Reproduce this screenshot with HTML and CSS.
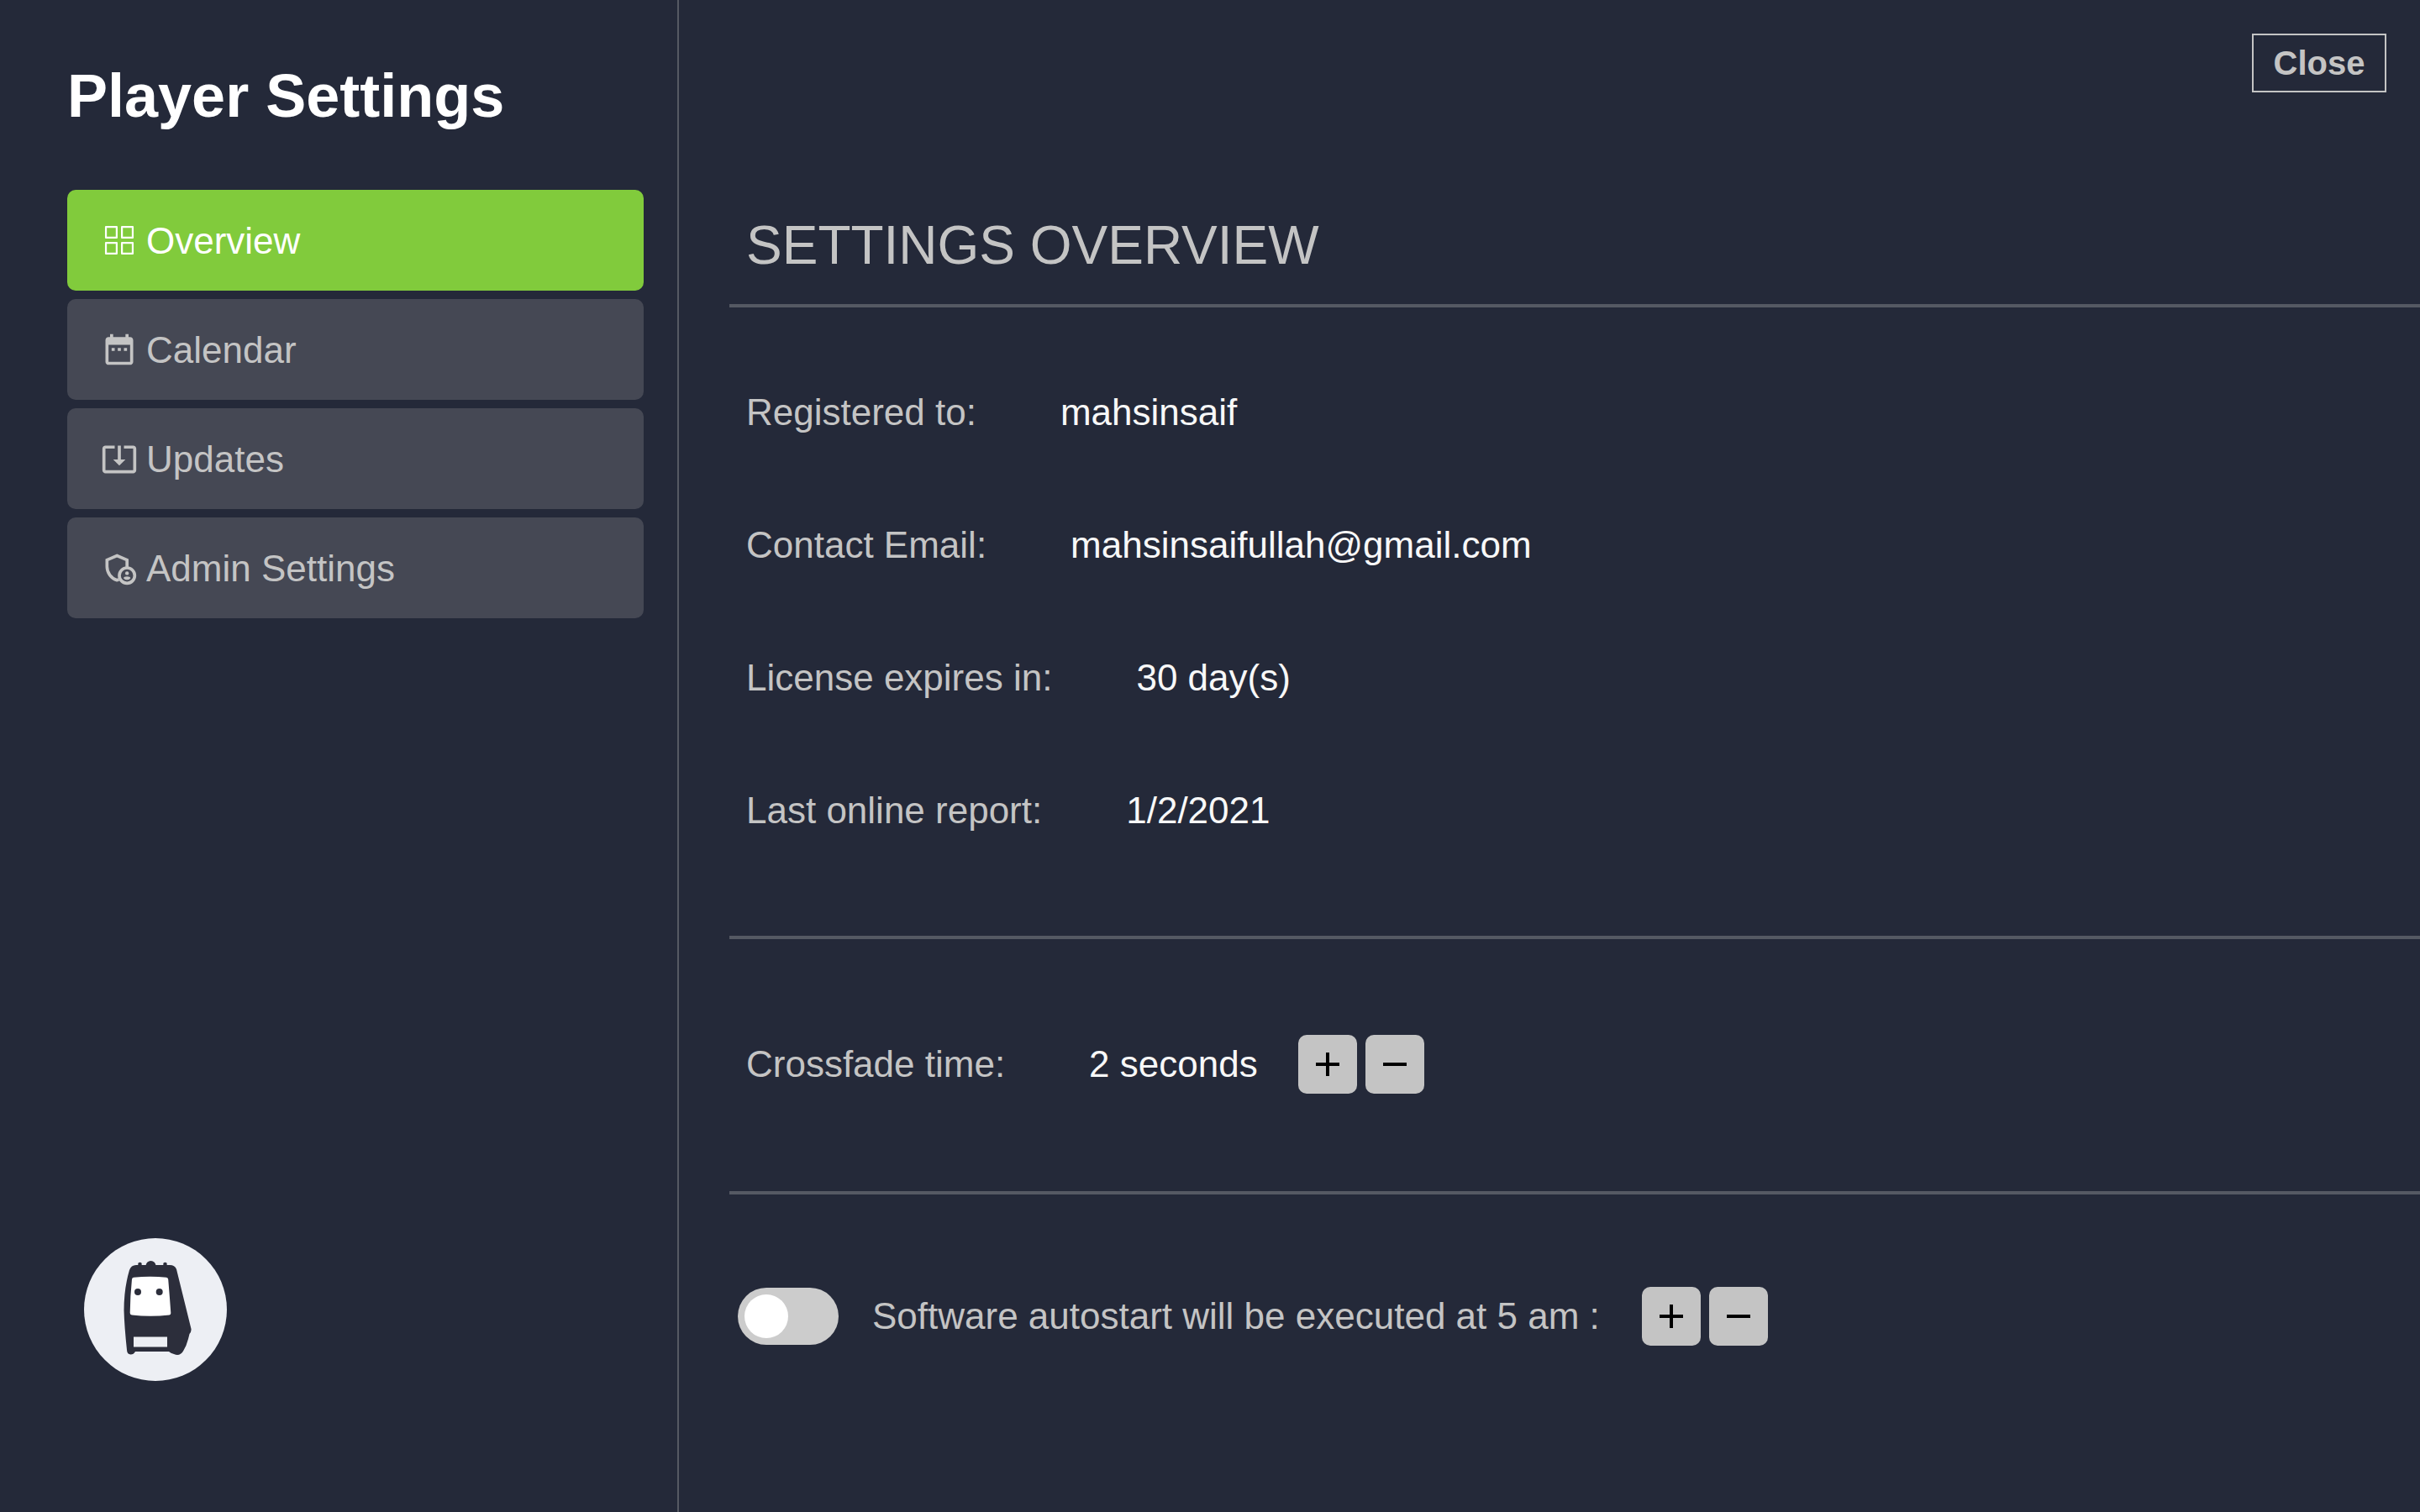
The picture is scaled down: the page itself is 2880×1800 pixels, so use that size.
FILE: index.html
```html
<!DOCTYPE html>
<html lang="en">
<head>
<meta charset="utf-8">
<title>Player Settings</title>
<link rel="stylesheet" href="styles.css">
</head>
<body>
<div class="app">
  <aside class="sidebar">
    <h1 class="title">Player Settings</h1>
    <nav class="menu">
      <a class="menu-item active" href="#overview">
        <svg class="icon" viewBox="0 0 24 24" aria-hidden="true"><path fill="none" stroke="currentColor" stroke-width="1.200" stroke-linejoin="round" d="M3.300 3.300h7v7h-7zM13.700 3.300h7v7h-7zM3.300 13.700h7v7h-7zM13.700 13.700h7v7h-7z"/></svg>
        <span>Overview</span>
      </a>
      <a class="menu-item" href="#calendar">
        <svg class="icon" viewBox="0 0 24 24" aria-hidden="true"><path fill="currentColor" d="M9 11H7v2h2v-2zm4 0h-2v2h2v-2zm4 0h-2v2h2v-2zm2-7h-1V2h-2v2H8V2H6v2H5c-1.110 0-1.990.9-1.990 2L3 20c0 1.100.89 2 2 2h14c1.100 0 2-.9 2-2V6c0-1.100-.9-2-2-2zm0 16H5V9h14v11z"/></svg>
        <span>Calendar</span>
      </a>
      <a class="menu-item" href="#updates">
        <svg class="icon" viewBox="0 0 24 24" aria-hidden="true"><path fill="currentColor" d="M12 16.500l4-4h-3v-9h-2v9H8l4 4zm9-13h-6v1.990h6v14.030H3V5.490h6V3.500H3c-1.100 0-2 .9-2 2v14c0 1.100.9 2 2 2h18c1.100 0 2-.9 2-2v-14c0-1.100-.9-2-2-2z"/></svg>
        <span>Updates</span>
      </a>
      <a class="menu-item" href="#admin">
        <svg class="icon" viewBox="0 0 24 24" aria-hidden="true"><path fill="none" stroke="currentColor" stroke-width="2" d="M17 11.500V6.900L10.500 4.100 4 6.900v4.300c0 4 2.700 7.700 6.500 8.800l1.200-.4"/><circle cx="17" cy="17" r="5" fill="none" stroke="currentColor" stroke-width="2"/><circle cx="17" cy="15.500" r="1.200" fill="currentColor"/><path fill="currentColor" d="M17 17.600c-1.200 0-2.300.5-2.300 1.100.5.700 1.300 1.100 2.300 1.100s1.800-.4 2.300-1.100c0-.6-1.100-1.100-2.300-1.100z"/></svg>
        <span>Admin Settings</span>
      </a>
    </nav>
    <svg class="logo" viewBox="0 0 170 170" role="img" aria-label="Player">
      <circle cx="85" cy="85" r="85" fill="#edeff4"/>
      <path fill="#2c2e3b" d="M62 32H102Q108 32 110 37L127.500 108Q128 111 125.500 114L124 120Q122 128 118 134.500Q114 141 107 138Q103 137 101 135H61Q59 138.500 55.500 138.500Q51 138 51 133Q48 105 47.500 86Q47.500 60 54 38Q56 32 62 32Z"/>
      <circle cx="66.500" cy="31" r="2.300" fill="#2c2e3b"/>
      <circle cx="79.500" cy="33" r="6" fill="#2c2e3b"/>
      <circle cx="96.500" cy="31" r="2.300" fill="#2c2e3b"/>
      <path fill="#fff" d="M57 49Q57 47 59 46.700Q79 45 98 46.700Q100 47 100.200 49Q102 70 103.300 89Q103.500 91 101.500 91.500Q79 94 57 91.500Q54.700 91 54.700 89Q55 68 57 49Z"/>
      <circle cx="64" cy="64" r="4" fill="#2c2e3b"/>
      <circle cx="89.700" cy="64" r="4" fill="#2c2e3b"/>
      <path fill="#edeff4" d="M59 117.500h40V129.500H59z"/>
    </svg>
  </aside>
  <main class="content">
    <header class="topbar"><button class="close" type="button">Close</button></header>
    <h2 class="heading">SETTINGS OVERVIEW</h2>
    <dl class="details">
      <div class="row"><dt>Registered to:</dt><dd>mahsinsaif</dd></div>
      <div class="row"><dt>Contact Email:</dt><dd>mahsinsaifullah@gmail.com</dd></div>
      <div class="row"><dt>License expires in:</dt><dd>30 day(s)</dd></div>
      <div class="row"><dt>Last online report:</dt><dd>1/2/2021</dd></div>
    </dl>
    <section class="setting crossfade">
      <span>Crossfade time:</span>
      <output class="value">2 seconds</output>
      <div class="stepper">
        <button class="step" type="button" aria-label="Increase crossfade time"><svg viewBox="0 0 28 28"><path d="M14 0v28M0 14h28"/></svg></button>
        <button class="step" type="button" aria-label="Decrease crossfade time"><svg viewBox="0 0 28 28"><path d="M0 14h28"/></svg></button>
      </div>
    </section>
    <section class="setting autostart">
      <input class="switch" type="checkbox" id="autostart">
      <label for="autostart">Software autostart will be executed at 5 am :</label>
      <div class="stepper">
        <button class="step" type="button" aria-label="Later autostart"><svg viewBox="0 0 28 28"><path d="M14 0v28M0 14h28"/></svg></button>
        <button class="step" type="button" aria-label="Earlier autostart"><svg viewBox="0 0 28 28"><path d="M0 14h28"/></svg></button>
      </div>
    </section>
  </main>
</div>
</body>
</html>
```
FILE: styles.css
```css
* { box-sizing: border-box; }
body {
  margin: 0;
  background: #242939;
  color: #c4c4c4;
  font-family: "Liberation Sans", Helvetica, Arial, sans-serif;
  font-size: 44px;
  line-height: 50px;
}
button { font: inherit; }
.app { display: flex; min-height: 100vh; }
.sidebar {
  display: flex;
  flex-direction: column;
  flex: 0 0 808px;
  padding: 74px 40px 156px 80px;
  border-right: 2px solid #555963;
}
.title {
  margin: 0 0 72px;
  color: #fff;
  font-size: 72px;
  line-height: 80px;
}
.menu { display: flex; flex-direction: column; gap: 10px; }
.menu-item {
  display: flex;
  align-items: center;
  gap: 10px;
  height: 120px;
  padding: 0 40px;
  border-radius: 10px;
  background: #454854;
  color: inherit;
  text-decoration: none;
}
.menu-item span { padding-top: 2px; }
.menu-item.active { background: #81cb3c; color: #fff; }
.icon { width: 44px; height: 44px; }
.logo { width: 170px; height: 170px; margin: auto 0 0 20px; }
.content { flex: 1; padding: 40px 0 0 60px; }
.topbar { display: flex; justify-content: flex-end; padding-right: 40px; }
.close {
  width: 160px;
  height: 70px;
  padding: 0;
  border: 2px solid #c4c4c4;
  background: none;
  color: inherit;
  font-size: 40px;
  font-weight: bold;
}
.heading {
  margin: 0;
  padding: 144px 20px 32px;
  border-bottom: 4px solid #555963;
  font-size: 64px;
  font-weight: normal;
  line-height: 76px;
}
.details {
  display: flex;
  flex-direction: column;
  gap: 108px;
  margin: 0;
  padding: 100px 20px 124px;
}
.row { display: flex; gap: 100px; }
.row dd { margin: 0; color: #f8f8f8; }
.setting {
  display: flex;
  align-items: center;
  border-top: 4px solid #555963;
}
.crossfade { padding: 114px 20px 116px; }
.value { margin: 0 48px 0 100px; color: #f8f8f8; }
.stepper { display: flex; gap: 10px; }
.step {
  display: flex;
  align-items: center;
  justify-content: center;
  width: 70px;
  height: 70px;
  padding: 0;
  border: 0;
  border-radius: 10px;
  background: #c4c4c4;
}
.step svg { width: 28px; height: 28px; stroke: #000; stroke-width: 4; }
.autostart { padding: 110px 10px; }
.autostart label { margin: 0 50px 0 40px; }
.switch {
  appearance: none;
  width: 120px;
  height: 68px;
  margin: 0;
  padding: 8px;
  border-radius: 34px;
  background: #ccc;
}
.switch::before {
  content: "";
  display: block;
  width: 52px;
  height: 52px;
  border-radius: 50%;
  background: #fff;
}
.switch:checked { background: #81cb3c; }
.switch:checked::before { margin-left: auto; }
```
